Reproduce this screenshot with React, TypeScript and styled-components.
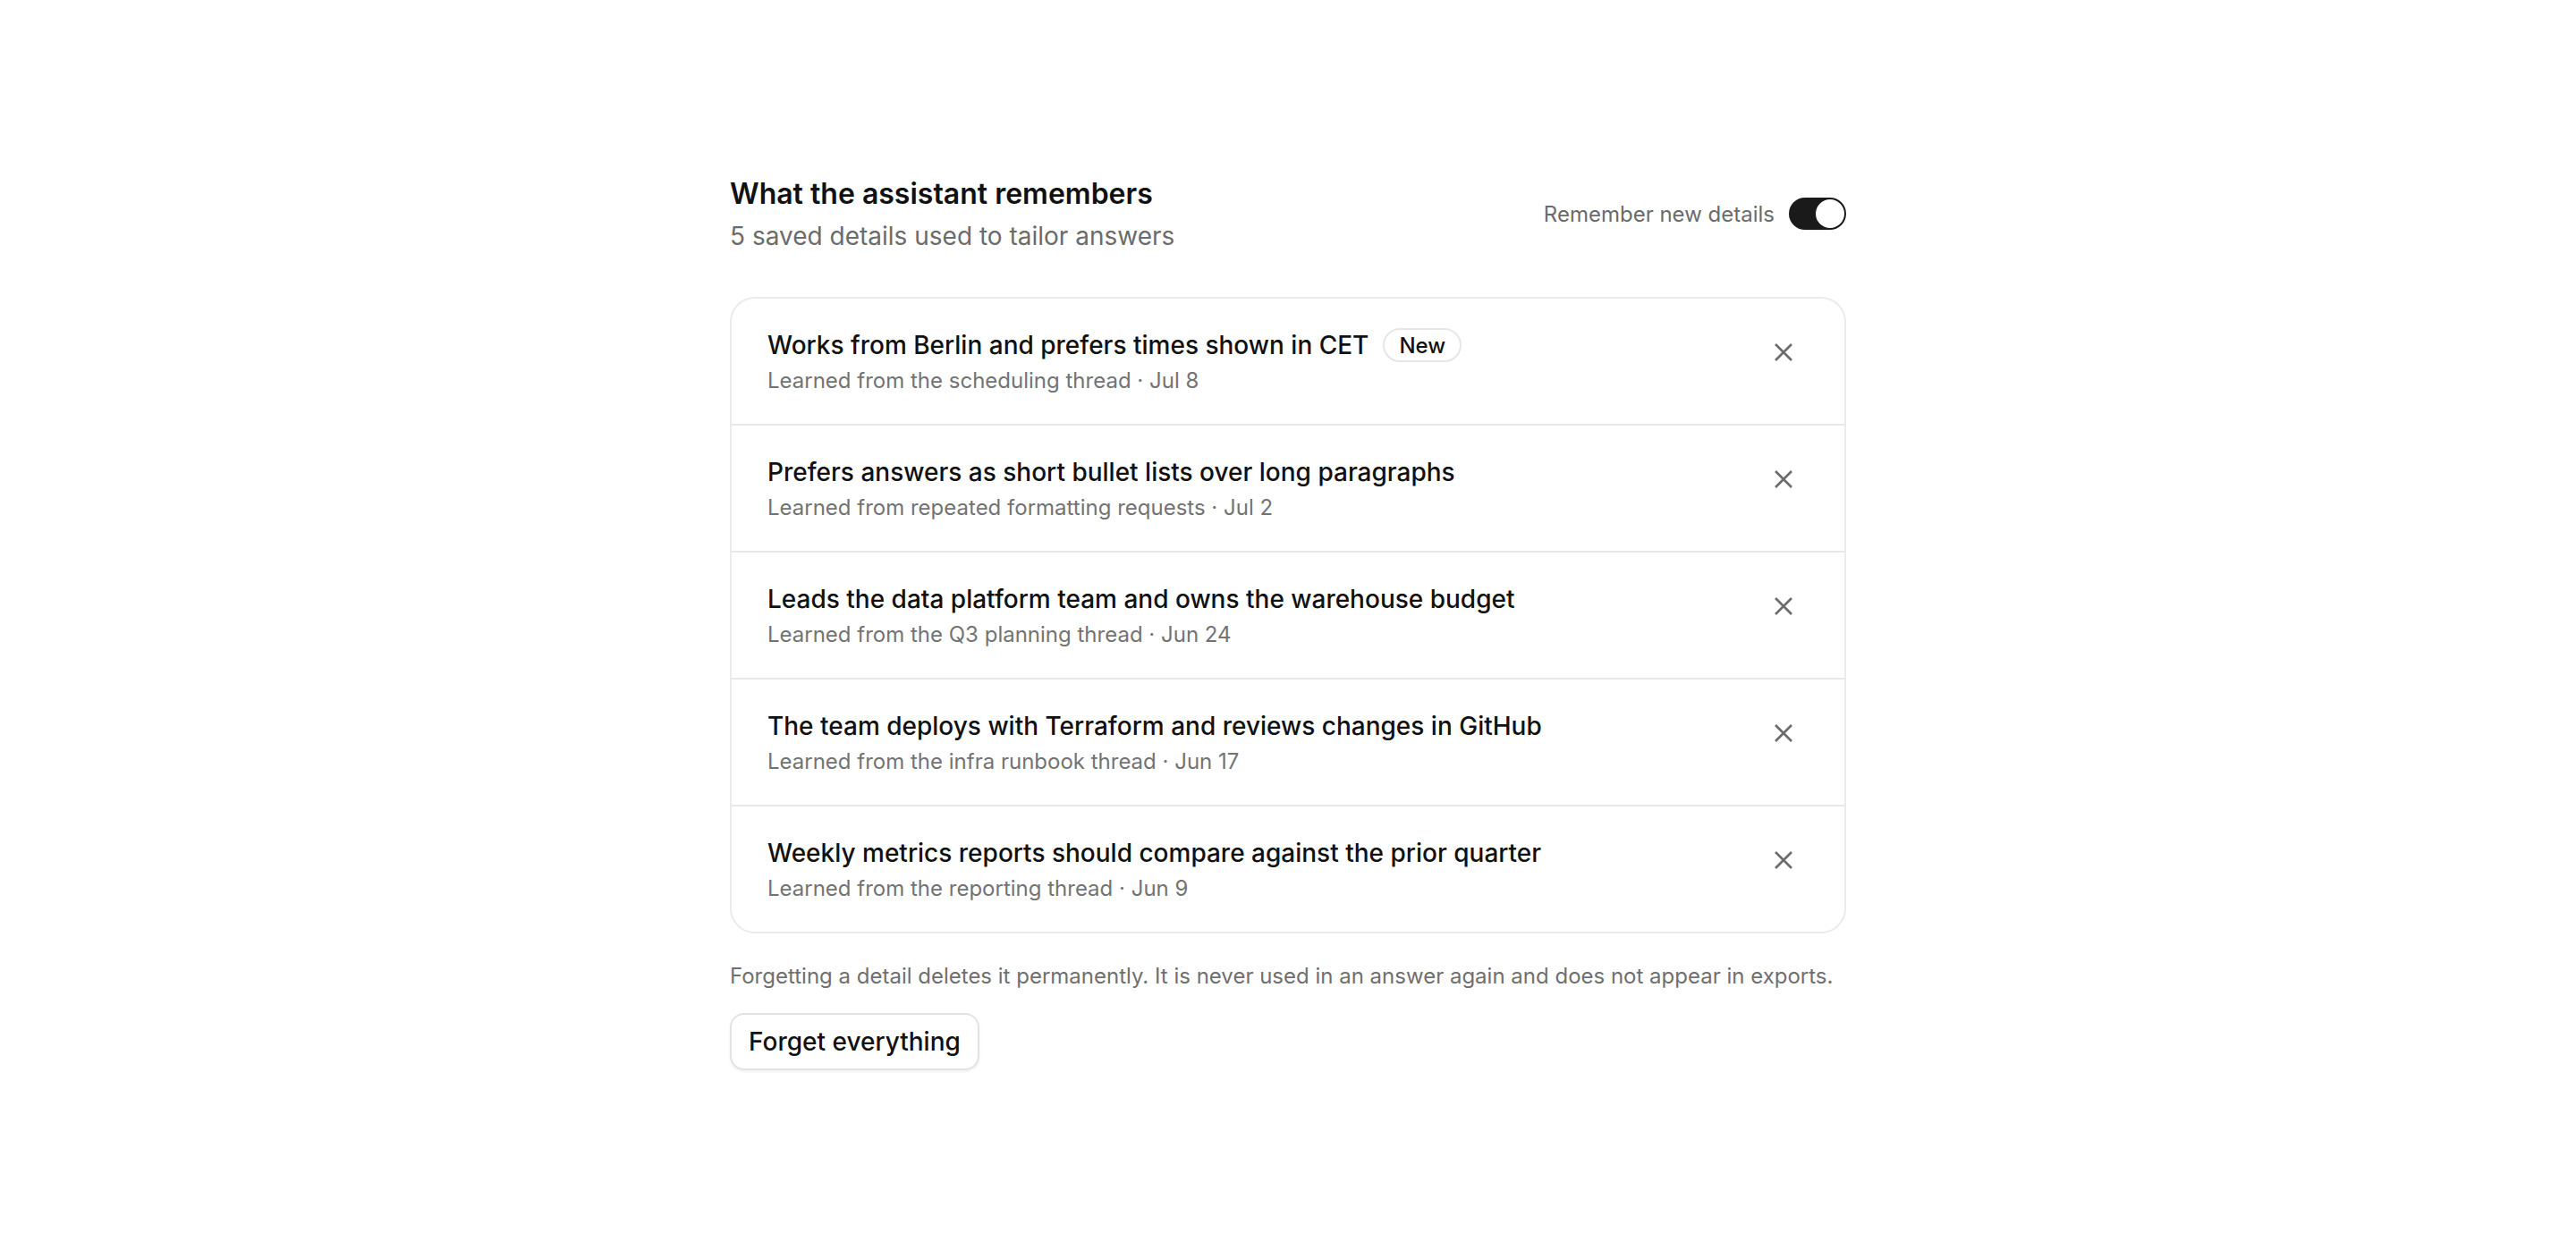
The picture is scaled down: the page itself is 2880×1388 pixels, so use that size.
import React from "react";
import styled, { createGlobalStyle } from "styled-components";

const GlobalStyle = createGlobalStyle`
  html, body {
    margin: 0;
    padding: 0;
    background: #ffffff;
  }
  body {
    font-family: Inter, "Noto Sans", "Liberation Sans", sans-serif;
    color: #111111;
    -webkit-font-smoothing: antialiased;
  }
  * { box-sizing: border-box; }
`;

const Page = styled.main`
  display: flex;
  justify-content: center;
  padding: 199px 0 120px;
`;

const Panel = styled.section`
  width: 1248px;
  display: flex;
  flex-direction: column;
`;

const Header = styled.header`
  display: flex;
  align-items: center;
  justify-content: space-between;
  margin-bottom: 53px;
`;

const TitleBlock = styled.div`
  display: flex;
  flex-direction: column;
  gap: 14px;
`;

const Heading = styled.h1`
  margin: 0;
  font-size: 32px;
  line-height: 36px;
  font-weight: 600;
  color: #111111;
`;

const Subtitle = styled.p`
  margin: 0;
  font-size: 28px;
  line-height: 30px;
  color: #6b6b6b;
`;

const ToggleRow = styled.label`
  display: flex;
  align-items: center;
  gap: 16px;
  font-size: 24px;
  color: #6b6b6b;
  cursor: pointer;
`;

const Track = styled.span<{ $on: boolean }>`
  position: relative;
  width: 64px;
  height: 36px;
  border-radius: 18px;
  background: ${(p) => (p.$on ? "#1a1a1a" : "#d4d4d4")};
  flex-shrink: 0;
`;

const Thumb = styled.span<{ $on: boolean }>`
  position: absolute;
  top: 2px;
  left: ${(p) => (p.$on ? "30px" : "2px")};
  width: 32px;
  height: 32px;
  border-radius: 50%;
  background: #ffffff;
`;

const Card = styled.ul`
  list-style: none;
  margin: 0;
  padding: 0;
  border: 2px solid #ebebeb;
  border-radius: 28px;
  overflow: hidden;
`;

const Row = styled.li`
  display: flex;
  align-items: flex-start;
  justify-content: space-between;
  padding: 30px 40px;
  & + & {
    border-top: 2px solid #e8e8e8;
  }
`;

const RowText = styled.div`
  display: flex;
  flex-direction: column;
`;

const TitleLine = styled.div`
  display: flex;
  align-items: center;
  gap: 16px;
`;

const RowTitle = styled.span`
  font-size: 28px;
  line-height: 44px;
  font-weight: 500;
  color: #111111;
`;

const Badge = styled.span`
  display: inline-flex;
  align-items: center;
  height: 38px;
  padding: 0 16px;
  border: 2px solid #e6e6e6;
  border-radius: 19px;
  font-size: 24px;
  font-weight: 500;
  color: #111111;
`;

const Meta = styled.span`
  font-size: 24px;
  line-height: 36px;
  color: #737373;
`;

const RemoveButton = styled.button`
  display: flex;
  align-items: center;
  justify-content: center;
  width: 56px;
  height: 56px;
  margin-top: 2px;
  padding: 0;
  border: none;
  border-radius: 12px;
  background: transparent;
  color: #6b6b6b;
  cursor: pointer;
  flex-shrink: 0;
`;

const Note = styled.p`
  margin: 28px 0 0;
  font-size: 24px;
  line-height: 40px;
  color: #6f6f6f;
`;

const ForgetButton = styled.button`
  align-self: flex-start;
  margin-top: 21px;
  height: 64px;
  padding: 0 19px;
  border: 2px solid #e3e3e3;
  border-radius: 16px;
  background: #ffffff;
  box-shadow: 0 2px 3px rgba(0, 0, 0, 0.06);
  font-family: inherit;
  font-size: 28px;
  font-weight: 500;
  color: #111111;
  cursor: pointer;
`;

const CloseIcon = () => (
  <svg width="20" height="20" viewBox="0 0 20 20" fill="none">
    <path d="M1 1L19 19M19 1L1 19" stroke="currentColor" strokeWidth="2.6" strokeLinecap="butt" />
  </svg>
);

type Memory = { title: string; meta: string; isNew?: boolean };

const memories: Memory[] = [
  { title: "Works from Berlin and prefers times shown in CET", meta: "Learned from the scheduling thread · Jul 8", isNew: true },
  { title: "Prefers answers as short bullet lists over long paragraphs", meta: "Learned from repeated formatting requests · Jul 2" },
  { title: "Leads the data platform team and owns the warehouse budget", meta: "Learned from the Q3 planning thread · Jun 24" },
  { title: "The team deploys with Terraform and reviews changes in GitHub", meta: "Learned from the infra runbook thread · Jun 17" },
  { title: "Weekly metrics reports should compare against the prior quarter", meta: "Learned from the reporting thread · Jun 9" },
];

export default function App() {
  const on = true;
  return (
    <>
      <GlobalStyle />
      <Page>
        <Panel>
          <Header>
            <TitleBlock>
              <Heading>What the assistant remembers</Heading>
              <Subtitle>5 saved details used to tailor answers</Subtitle>
            </TitleBlock>
            <ToggleRow>
              Remember new details
              <Track $on={on}>
                <Thumb $on={on} />
              </Track>
            </ToggleRow>
          </Header>
          <Card>
            {memories.map((m) => (
              <Row key={m.title}>
                <RowText>
                  <TitleLine>
                    <RowTitle>{m.title}</RowTitle>
                    {m.isNew && <Badge>New</Badge>}
                  </TitleLine>
                  <Meta>{m.meta}</Meta>
                </RowText>
                <RemoveButton aria-label="Forget">
                  <CloseIcon />
                </RemoveButton>
              </Row>
            ))}
          </Card>
          <Note>
            Forgetting a detail deletes it permanently. It is never used in an answer again and does not appear in exports.
          </Note>
          <ForgetButton>Forget everything</ForgetButton>
        </Panel>
      </Page>
    </>
  );
}
